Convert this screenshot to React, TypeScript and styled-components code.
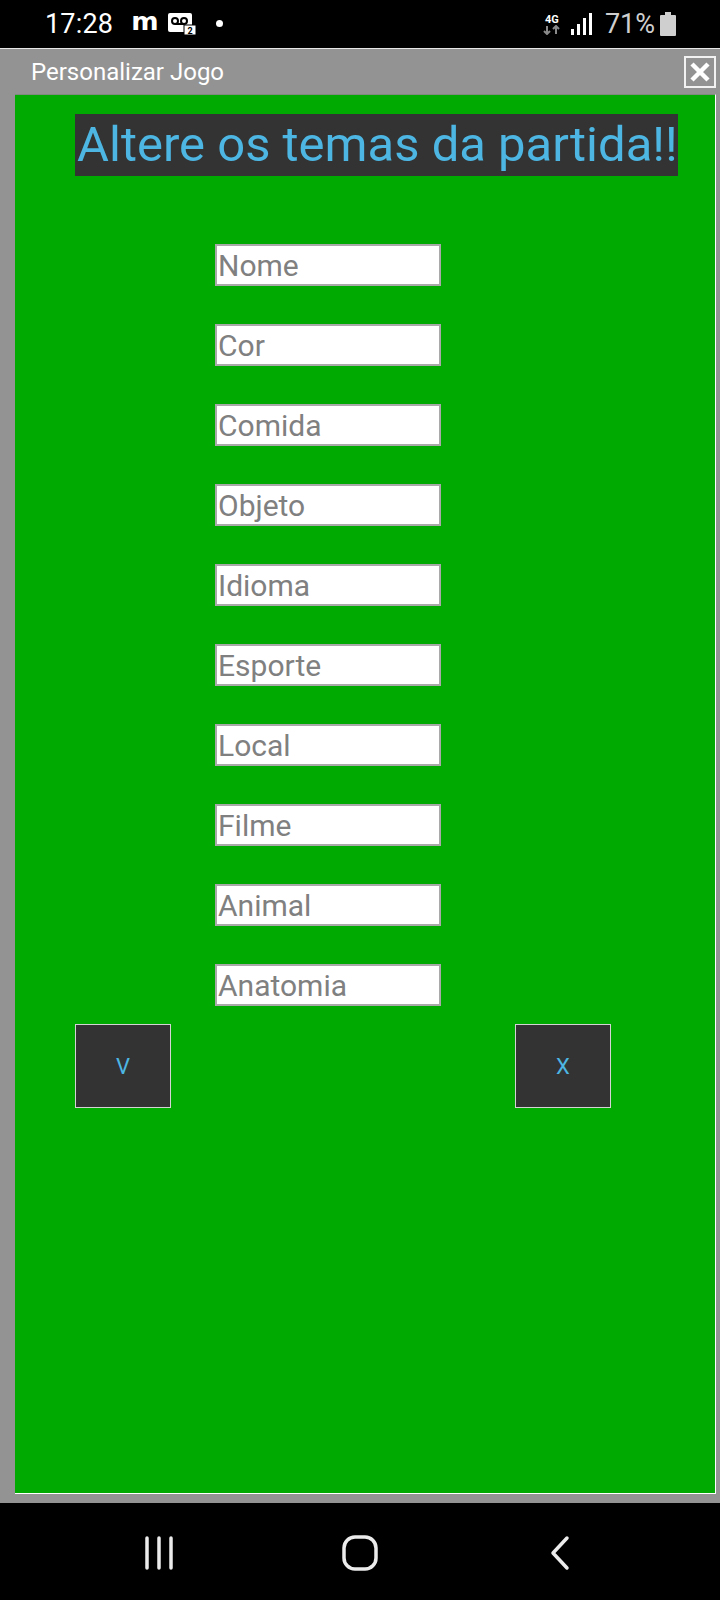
import React from "react";
import styled, { createGlobalStyle } from "styled-components";

const Global = createGlobalStyle`
  html, body { margin: 0; padding: 0; background: #000; }
  #root { width: 720px; height: 1600px; }
  * { box-sizing: border-box; }
`;

const Screen = styled.div`
  width: 720px;
  height: 1600px;
  display: flex;
  flex-direction: column;
  background: #000;
  font-family: Roboto, "Noto Sans", sans-serif;
`;

const StatusBar = styled.div`
  height: 48px;
  flex: none;
  display: flex;
  align-items: center;
  padding: 0 44px 0 45px;
  color: #fff;
`;

const Time = styled.span`
  font-size: 27px;
  letter-spacing: 0.2px;
  margin-right: 19px;
`;

const MGlyph = styled.span`
  font-family: "DejaVu Sans", sans-serif;
  font-weight: 900;
  font-size: 25px;
  line-height: 1;
  margin-right: 10px;
  margin-top: -6px;
  transform: scaleX(1.05);
`;

const Dot = styled.span`
  width: 7px;
  height: 7px;
  border-radius: 50%;
  background: #fff;
  margin-left: 19px;
  margin-top: -2px;
`;

const Spacer = styled.div`
  flex: 1;
`;

const Percent = styled.span`
  font-size: 27px;
  color: #cfcfcf;
  margin: 0 5px 0 12px;
`;

const NetLabel = styled.div`
  display: flex;
  flex-direction: column;
  align-items: center;
  margin-right: 10px;
`;

const NetText = styled.span`
  font-size: 11px;
  font-weight: 700;
  line-height: 11px;
  color: #fff;
`;

const Window = styled.div`
  flex: 1;
  display: flex;
  flex-direction: column;
  background: #939393;
  border-top: 1px solid #e6e6e6;
  padding: 0 4px 9px 15px;
`;

const TitleBar = styled.div`
  height: 45px;
  flex: none;
  display: flex;
  align-items: center;
  justify-content: space-between;
  margin-left: -15px;
  padding-left: 31px;
`;

const Title = styled.span`
  color: #fff;
  font-size: 24px;
`;

const CloseBox = styled.div`
  width: 32px;
  height: 32px;
  border: 2px solid #f2f2f2;
  display: flex;
  align-items: center;
  justify-content: center;
`;

const Content = styled.div`
  flex: 1;
  background: #00aa00;
  border-top: 1px solid #7d8a7d;
  border-right: 1px solid #fff;
  border-bottom: 1px solid #fff;
  display: flex;
  flex-direction: column;
  align-items: flex-start;
  padding-top: 19px;
`;

const Heading = styled.h1`
  margin: 0 0 0 60px;
  height: 62px;
  width: 603px;
  background: #333333;
  color: #4db6e2;
  font-family: Roboto, sans-serif;
  font-weight: 400;
  font-size: 49px;
  line-height: 62px;
  padding-left: 2px;
  white-space: nowrap;
  overflow: hidden;
`;

const Fields = styled.div`
  display: flex;
  flex-direction: column;
  gap: 38px;
  margin: 68px 0 0 200px;
`;

const Field = styled.input`
  width: 226px;
  height: 42px;
  border: 2px solid #a9a9a9;
  background: #fff;
  padding: 0 0 0 1px;
  font-family: Roboto, sans-serif;
  font-size: 30px;
  color: #333;
  outline: none;
  &::placeholder {
    color: #808080;
  }
`;

const ButtonRow = styled.div`
  align-self: stretch;
  display: flex;
  justify-content: space-between;
  padding: 0 104px 0 60px;
  margin-top: 18px;
`;

const ActionButton = styled.button`
  width: 96px;
  height: 84px;
  background: #333333;
  border: 1px solid #d4d4d4;
  color: #4db6e2;
  font-family: Roboto, sans-serif;
  font-size: 22px;
  padding: 0;
  display: flex;
  align-items: center;
  justify-content: center;
`;

const NavBar = styled.div`
  height: 97px;
  flex: none;
  display: flex;
  align-items: center;
  justify-content: center;
  padding-top: 2px;
`;

const NavSlot = styled.div`
  width: 200px;
  display: flex;
  justify-content: center;
`;

const fields = [
  "Nome",
  "Cor",
  "Comida",
  "Objeto",
  "Idioma",
  "Esporte",
  "Local",
  "Filme",
  "Animal",
  "Anatomia",
];

export default function App() {
  return (
    <>
      <Global />
      <Screen>
        <StatusBar>
          <Time>17:28</Time>
          <MGlyph>m</MGlyph>
          <svg width="29" height="22" viewBox="0 0 29 22">
            <rect x="0" y="0" width="24" height="19" rx="2" fill="#fff" />
            <circle cx="7" cy="8" r="3" fill="none" stroke="#000" strokeWidth="2" />
            <circle cx="16" cy="8" r="3" fill="none" stroke="#000" strokeWidth="2" />
            <line x1="7" y1="11" x2="16" y2="11" stroke="#000" strokeWidth="2" />
            <rect x="16" y="12" width="12" height="10" fill="#fff" stroke="#000" strokeWidth="1" />
            <text x="22" y="20.5" fontSize="9" fontWeight="700" textAnchor="middle" fill="#000" fontFamily="Roboto">2</text>
          </svg>
          <Dot />
          <Spacer />
          <NetLabel>
            <NetText>4G</NetText>
            <svg width="18" height="10" viewBox="0 0 18 10">
              <path d="M4 1v8M1 6l3 3 3-3" stroke="#8a8a8a" strokeWidth="2" fill="none" />
              <path d="M13 9V1M10 4l3-3 3 3" stroke="#8a8a8a" strokeWidth="2" fill="none" />
            </svg>
          </NetLabel>
          <svg width="22" height="22" viewBox="0 0 22 22">
            <rect x="0" y="16" width="3" height="6" fill="#fff" />
            <rect x="6" y="11" width="3" height="11" fill="#fff" />
            <rect x="12" y="5" width="3" height="17" fill="#fff" />
            <rect x="18" y="0" width="3" height="22" fill="#fff" />
          </svg>
          <Percent>71%</Percent>
          <svg width="16" height="24" viewBox="0 0 16 24">
            <rect x="5" y="0" width="6" height="3" fill="#cfcfcf" />
            <rect x="0" y="3" width="16" height="21" rx="1" fill="#cfcfcf" />
          </svg>
        </StatusBar>
        <Window>
          <TitleBar>
            <Title>Personalizar Jogo</Title>
            <CloseBox>
              <svg width="22" height="22" viewBox="0 0 22 22">
                <path d="M3 3L19 19M19 3L3 19" stroke="#fff" strokeWidth="4.5" />
              </svg>
            </CloseBox>
          </TitleBar>
          <Content>
            <Heading>Altere os temas da partida!!</Heading>
            <Fields>
              {fields.map((f) => (
                <Field key={f} placeholder={f} />
              ))}
            </Fields>
            <ButtonRow>
              <ActionButton>V</ActionButton>
              <ActionButton>X</ActionButton>
            </ButtonRow>
          </Content>
        </Window>
        <NavBar>
          <NavSlot>
            <svg width="32" height="34" viewBox="0 0 32 34">
              <path d="M3 2v30M15 2v30M27 2v30" stroke="#ececec" strokeWidth="3.5" strokeLinecap="round" />
            </svg>
          </NavSlot>
          <NavSlot>
            <svg width="38" height="38" viewBox="0 0 38 38">
              <rect x="3" y="3" width="32" height="32" rx="11" fill="none" stroke="#ececec" strokeWidth="3.5" />
            </svg>
          </NavSlot>
          <NavSlot>
            <svg width="24" height="36" viewBox="0 0 24 36">
              <path d="M19 3L5 18l14 15" stroke="#ececec" strokeWidth="3.5" fill="none" strokeLinecap="round" strokeLinejoin="round" />
            </svg>
          </NavSlot>
        </NavBar>
      </Screen>
    </>
  );
}
